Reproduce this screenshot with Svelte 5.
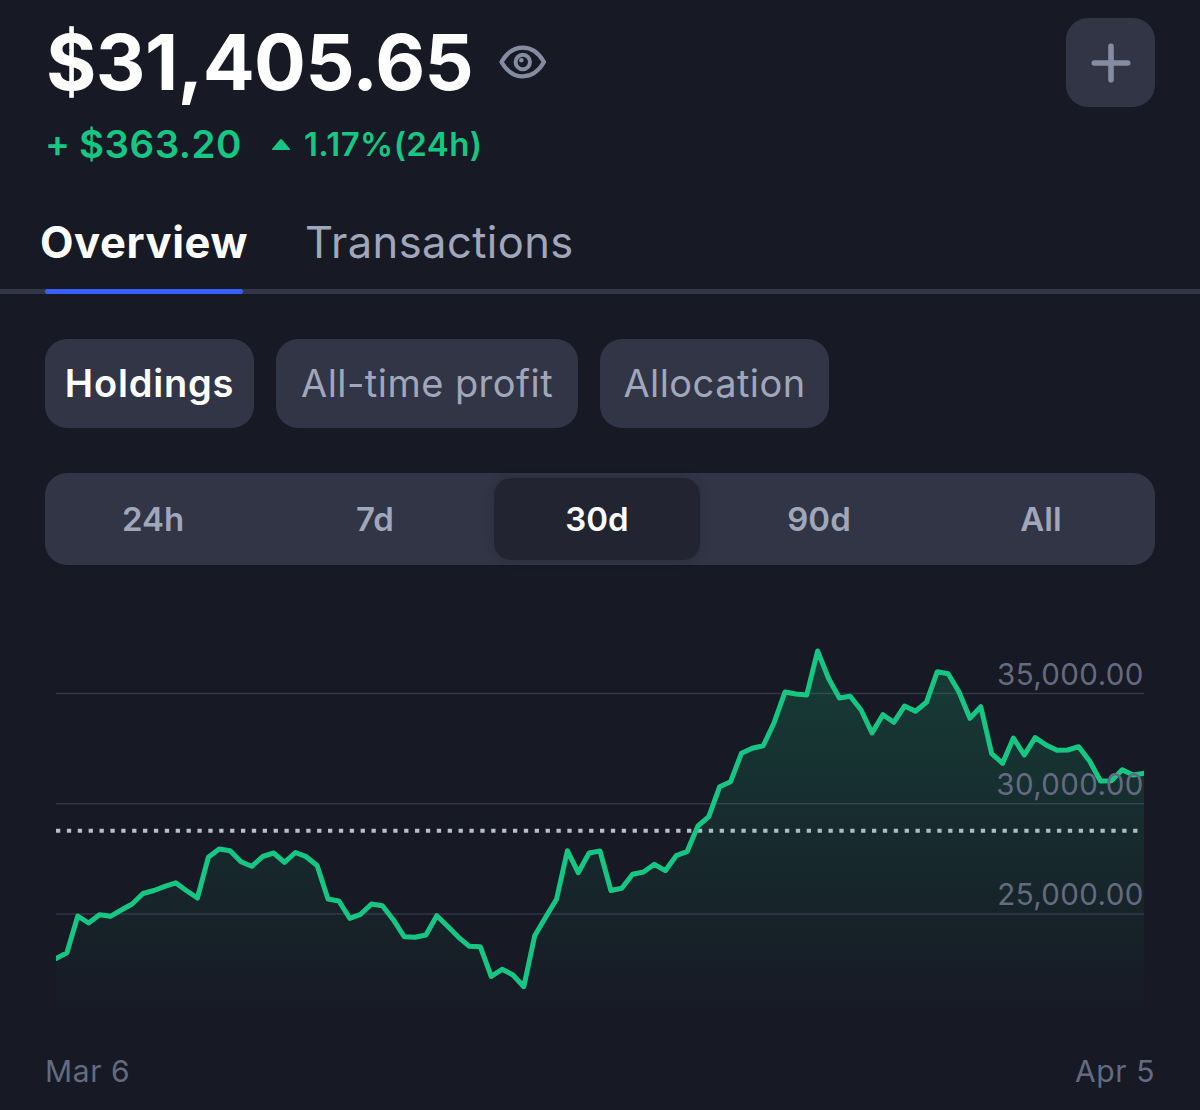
<script>
  let tab = 'Overview';
  let view = 'Holdings';
  let range = '30d';

  const tabs = ['Overview', 'Transactions'];
  const views = ['Holdings', 'All-time profit', 'Allocation'];
  const ranges = ['24h', '7d', '30d', '90d', 'All'];

  // chart space is 1200 x 400, one sample every 10.88 units
  const left = 56;
  const right = 1144;
  const bottom = 400;
  const samples = [
    338.5, 332.7, 296, 303, 294.7, 296.3, 290, 284, 273.5, 270.5,
    266.3, 262.8, 270.7, 278, 237.3, 229, 230.7, 241.7, 246.3, 236.5,
    233, 242.3, 232.5, 236.7, 245.5, 279, 281, 298.3, 294.3, 284,
    285.7, 299.7, 316.7, 317.3, 315, 295.7, 306.3, 317.3, 326.3, 326.7,
    356.3, 349.3, 355, 366.7, 315.7, 297.3, 279.3, 230.7, 252.7, 233,
    231, 270.5, 268.3, 254.3, 252, 244.3, 250.7, 235.7, 231.7, 206,
    196.7, 166.7, 161.7, 133.3, 128.3, 125.7, 102.7, 72, 74, 75,
    31, 58.3, 78, 76.3, 90, 113, 94.7, 102.3, 86, 91.3,
    82.3, 51.7, 53.7, 72, 98.3, 86.7, 133.7, 143.3, 118, 135,
    117.7, 125, 130.3, 130, 126.7, 141, 161, 160.7, 149.7, 155,
    153.3
  ];
  const gridLines = [
    { y: 73.5, label: '35,000.00' },
    { y: 183.7, label: '30,000.00' },
    { y: 294, label: '25,000.00' }
  ];

  $: step = (right - left) / (samples.length - 1);
  $: line = samples.map((y, i) => `${(left + i * step).toFixed(1)},${y}`).join(' ');
  $: area = `${left},${bottom} ${line} ${right},${bottom}`;
</script>

<main>
  <header>
    <div>
      <div class="balance">
        <h1>$31,405.65</h1>
        <svg class="eye" width="48" height="36" viewBox="0 0 48 36" fill="none">
          <path d="M2.500 18C8 8.500 15 3.700 23.800 3.700S39.500 8.500 45 18C39.500 27.500 32.500 32.300 23.800 32.300S8 27.500 2.500 18Z" stroke="#858ca2" stroke-width="4.200" stroke-linejoin="round" />
          <circle cx="23.800" cy="18" r="7.200" stroke="#858ca2" stroke-width="4" />
          <circle cx="22.300" cy="16.300" r="2.300" fill="#858ca2" />
        </svg>
      </div>
      <div class="change">
        <span class="plus">+</span>
        <span class="amount">$363.20</span>
        <svg width="20" height="12" viewBox="0 0 20 12"><path d="M1 11 9 1.500q1-1 2 0L19 11q.5 1-.8 1H1.800Q.5 12 1 11Z" fill="#16c784" /></svg>
        <span class="percent">1.17%(24h)</span>
      </div>
    </div>
    <button class="add" aria-label="Add">
      <svg width="40" height="40" viewBox="0 0 40 40" fill="none" stroke="#858ca2" stroke-width="5.600" stroke-linecap="round">
        <path d="M20 3.300v33.400M3.300 20h33.400" />
      </svg>
    </button>
  </header>

  <nav>
    {#each tabs as name}
      <button class:active={tab === name} on:click={() => (tab = name)}><span>{name}</span></button>
    {/each}
  </nav>

  <div class="views">
    {#each views as name}
      <button class:active={view === name} on:click={() => (view = name)}>{name}</button>
    {/each}
  </div>

  <div class="ranges">
    {#each ranges as name}
      <button class:active={range === name} on:click={() => (range = name)}>{name}</button>
    {/each}
  </div>

  <svg class="chart" width="1200" height="400" viewBox="0 0 1200 400">
    <defs>
      <linearGradient id="fade" gradientUnits="userSpaceOnUse" x1="0" y1="31" x2="0" y2="400">
        <stop offset="0" stop-color="#16c784" stop-opacity="0.200" />
        <stop offset="1" stop-color="#16c784" stop-opacity="0" />
      </linearGradient>
      <clipPath id="plot"><rect x={left} y="0" width={right - left} height="400" /></clipPath>
    </defs>
    {#each gridLines as g}
      <line x1={left} x2={right} y1={g.y} y2={g.y} stroke="#323546" stroke-width="1.500" />
    {/each}
    <line x1={left} x2={right} y1="210.700" y2="210.700" stroke="#b9bdcc" stroke-width="4" stroke-dasharray="4.300 6.580" />
    <polygon points={area} fill="url(#fade)" />
    <polyline points={line} fill="none" stroke="#16c784" stroke-width="5" stroke-linejoin="round" stroke-linecap="round" clip-path="url(#plot)" />
    {#each gridLines as g}
      <text x="1143.800" y={g.y - 8.800} text-anchor="end">{g.label}</text>
    {/each}
  </svg>

  <footer>
    <span>Mar 6</span>
    <span>Apr 5</span>
  </footer>
</main>

<style>
:global(body) {
  background: #171924;
}

main {
  width: 1200px;
  height: 1110px;
  overflow: hidden;
  background: #171924;
  color: #a1a7bb;
  font-family: Inter, 'Liberation Sans', sans-serif;
}

button {
  margin: 0;
  padding: 0;
  border: 0;
  background: none;
  color: inherit;
  font: inherit;
  cursor: pointer;
  white-space: nowrap;
}

header {
  display: flex;
  justify-content: space-between;
  height: 202px;
  padding: 18px 45px 0 46px;
  box-sizing: border-box;
}

.balance {
  display: flex;
  align-items: center;
  height: 88px;
  gap: 28px;
}

h1 {
  margin: 0;
  width: 425px;
  color: #fff;
  font-size: 77px;
  font-weight: 700;
  line-height: 90px;
  letter-spacing: -0.6px;
  white-space: nowrap;
}

.change {
  display: flex;
  align-items: center;
  height: 75px;
  color: #16c784;
  font-weight: 600;
  white-space: nowrap;
}

.plus {
  width: 33px;
  font-size: 37px;
  text-indent: -1px;
}

.amount {
  width: 192px;
  font-size: 38.5px;
  letter-spacing: 0.5px;
}

.percent {
  margin-left: 13px;
  font-size: 33px;
  letter-spacing: 0.4px;
}

.add {
  display: grid;
  place-items: center;
  width: 89px;
  height: 89px;
  border-radius: 22px;
  background: #323546;
}

nav {
  display: flex;
  gap: 62px;
  height: 92px;
  padding-left: 45px;
  box-sizing: border-box;
  box-shadow: inset 0 -5px #323546;
  font-size: 43.5px;
}

nav button {
  display: flex;
  flex-direction: column;
  align-items: center;
  height: 92px;
  line-height: 81px;
  letter-spacing: 0.4px;
}

nav button span {
  height: 87px;
}

nav button.active {
  width: 198px;
  color: #fff;
  font-weight: 700;
  letter-spacing: 0.6px;
}

nav button.active::after {
  content: '';
  width: 100%;
  height: 5px;
  border-radius: 3px;
  background: #3861fb;
}

.views {
  display: flex;
  gap: 22px;
  padding: 45px 45px 0;
}

.views button {
  width: 229px;
  height: 89px;
  padding-bottom: 2px;
  border-radius: 22px;
  background: #323546;
  font-size: 38px;
  letter-spacing: 0.45px;
}

.views button:nth-child(2) {
  width: 302px;
}

.views button.active {
  width: 209px;
  color: #fff;
  font-weight: 600;
  letter-spacing: 0.8px;
}

.ranges {
  display: grid;
  grid-template-columns: repeat(5, 206px);
  gap: 16px;
  height: 92px;
  margin: 45px 45px 0;
  padding: 5px;
  box-sizing: border-box;
  border-radius: 22px;
  background: #323546;
  font-size: 33px;
  font-weight: 600;
}

.ranges button.active {
  border-radius: 17px;
  background: #222531;
  box-shadow: 0 0 10px rgba(23, 25, 36, 0.25);
  color: #fff;
}

.chart {
  display: block;
  margin-top: 55px;
}

.chart text {
  fill: #646b80;
  font-size: 29.5px;
  letter-spacing: 0.4px;
}

footer {
  display: flex;
  justify-content: space-between;
  padding: 33px 45px 0;
  color: #646b80;
  font-size: 30px;
  line-height: 36px;
  letter-spacing: 0.6px;
}
</style>
